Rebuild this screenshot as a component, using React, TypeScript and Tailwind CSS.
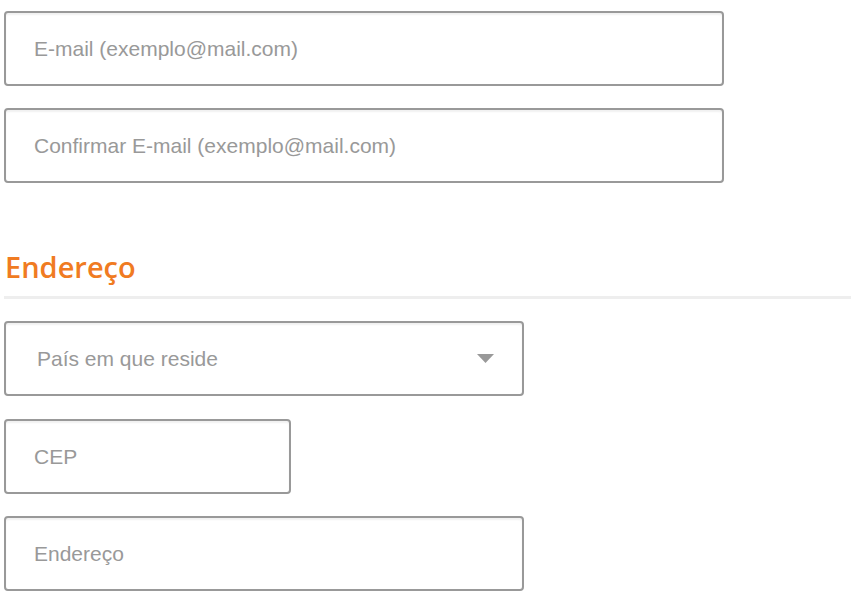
const inputClass =
  "h-[75px] rounded-[4px] border-2 border-[#999999] bg-white px-[28px] text-[21px] text-[#999999] shadow-[inset_0_2px_2px_rgba(0,0,0,0.06)] flex items-center";

const sans = { fontFamily: '"Liberation Sans", Arial, sans-serif' };

function Field({ label, width }: { label: string; width: string }) {
  return (
    <div className={`${inputClass} ${width}`} style={sans}>
      {label}
    </div>
  );
}

export default function App() {
  return (
    <div className="min-h-screen bg-white pl-[4px] pt-[11px]">
      <div className="flex flex-col gap-[22px]">
        <Field label="E-mail (exemplo@mail.com)" width="w-[720px]" />
        <Field label="Confirmar E-mail (exemplo@mail.com)" width="w-[720px]" />
      </div>

      {/* Address section */}
      <h2
        className="mt-[68px] pl-[1px] text-[29px] font-semibold leading-[32px] text-[#f07b22]"
        style={{ fontFamily: '"Open Sans", sans-serif' }}
      >
        Endereço
      </h2>
      <div className="mt-[13px] h-[3px] bg-[#eeeeee]" />

      <div className="mt-[22px] flex flex-col gap-[22px]">
        <div className={`${inputClass} mb-[1px] w-[520px] justify-between pl-[31px] pr-[28px]`} style={sans}>
          <span>País em que reside</span>
          <svg width="17" height="9" viewBox="0 0 17 9" className="mt-[-1px]">
            <path d="M0 0 H17 L8.5 9 Z" fill="#999999" />
          </svg>
        </div>
        <Field label="CEP" width="w-[287px]" />
        <Field label="Endereço" width="w-[520px]" />
      </div>
    </div>
  );
}
